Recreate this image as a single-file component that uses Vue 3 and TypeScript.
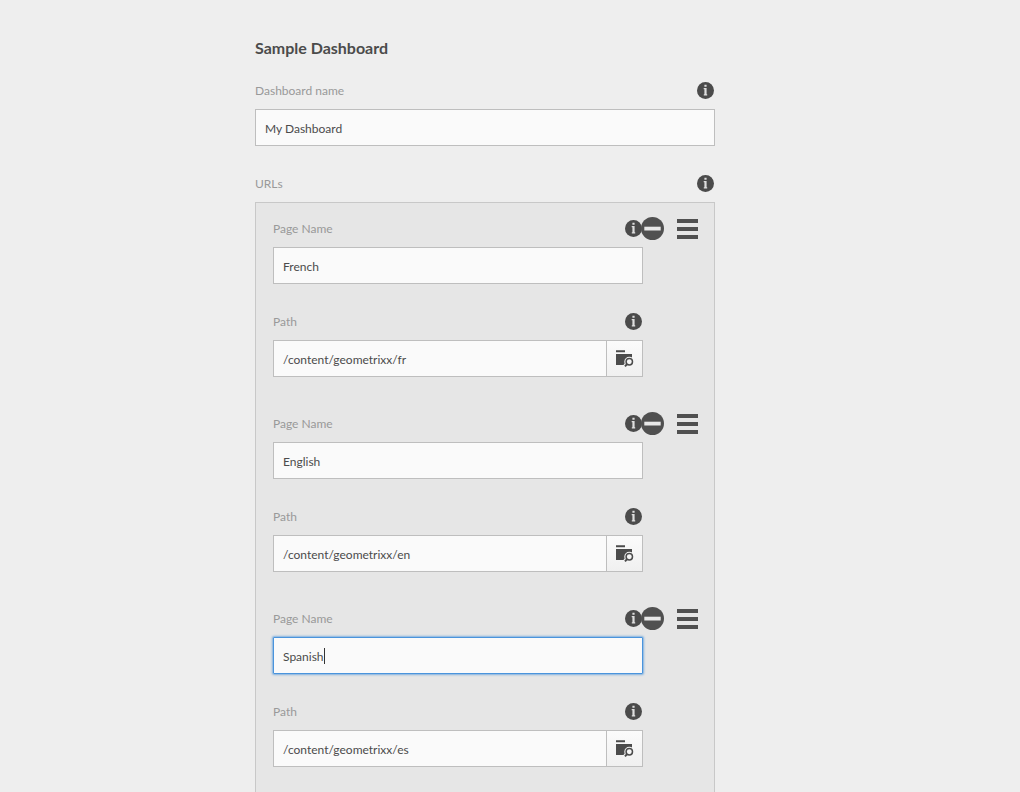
<script setup lang="ts">
import { ref } from 'vue'

interface UrlEntry {
  id: string
  name: string
  path: string
}

const dashboardName = ref('My Dashboard')
const activeId = ref('es')
const entries = ref<UrlEntry[]>([
  { id: 'fr', name: 'French', path: '/content/geometrixx/fr' },
  { id: 'en', name: 'English', path: '/content/geometrixx/en' },
  { id: 'es', name: 'Spanish', path: '/content/geometrixx/es' },
])

function removeEntry(id: string) {
  entries.value = entries.value.filter((entry) => entry.id !== id)
}
</script>

<template>
  <svg class="symbols" aria-hidden="true">
    <symbol id="icon-info" viewBox="0 0 17 17">
      <circle cx="8.5" cy="8.5" r="8.5" fill="#4b4b4b" />
      <path d="M7.4 2.8h2.2v2H7.4zM6.7 6.1h2.9v6.2h.6v1.3H6.8v-1.3h.6V7.3h-.7z" fill="#dedede" />
    </symbol>
    <symbol id="icon-remove" viewBox="0 0 23 23">
      <circle cx="11.5" cy="11.5" r="11.5" fill="#505050" />
      <path d="M3.3 9.7h16.4v3.8H3.3z" fill="#e8e8e8" />
    </symbol>
    <symbol id="icon-move" viewBox="0 0 21 20">
      <path d="M0 0h21v4H0zM0 8h21v4H0zM0 16h21v4H0z" fill="#505050" />
    </symbol>
    <symbol id="icon-browse" viewBox="0 0 18 17">
      <path d="M0 .2h9v2H0zM0 4h16v11H0z" fill="#4b4b4b" />
      <circle cx="13.3" cy="11.7" r="5" fill="#f6f6f6" />
      <path d="M11 14l-2.6 2.8" stroke="#f6f6f6" stroke-width="4" />
      <circle cx="13.3" cy="11.7" r="3.2" fill="none" stroke="#4b4b4b" stroke-width="1.5" />
      <path d="M11.2 13.9l-2.2 2.5" stroke="#4b4b4b" stroke-width="2" />
    </symbol>
  </svg>

  <form class="page" @submit.prevent>
    <h1 class="title">Sample Dashboard</h1>

    <div class="field">
      <div class="label-row">
        <label for="dashboard-name">Dashboard name</label>
        <button type="button" class="icon-button info" aria-label="About dashboard name">
          <svg><use href="#icon-info" /></svg>
        </button>
      </div>
      <input id="dashboard-name" v-model="dashboardName" class="textbox" type="text" />
    </div>

    <div class="label-row">
      <span id="urls-label">URLs</span>
      <button type="button" class="icon-button info" aria-label="About URLs">
        <svg><use href="#icon-info" /></svg>
      </button>
    </div>
    <ol class="url-list" aria-labelledby="urls-label">
      <li v-for="entry in entries" :key="entry.id" class="url-item">
        <div class="url-fields">
          <div class="field">
            <div class="label-row">
              <label :for="`name-${entry.id}`">Page Name</label>
              <button type="button" class="icon-button info" aria-label="About page name">
                <svg><use href="#icon-info" /></svg>
              </button>
            </div>
            <div class="editor">
              <input
                :id="`name-${entry.id}`"
                v-model="entry.name"
                class="textbox"
                :class="{ active: activeId === entry.id }"
                type="text"
                @focus="activeId = entry.id"
              />
              <span v-if="activeId === entry.id" class="caret-layer" aria-hidden="true">
                <span class="caret-offset">{{ entry.name }}</span>
                <span class="caret"></span>
              </span>
            </div>
          </div>
          <div class="label-row">
            <label :for="`path-${entry.id}`">Path</label>
            <button type="button" class="icon-button info" aria-label="About path">
              <svg><use href="#icon-info" /></svg>
            </button>
          </div>
          <div class="path-group">
            <input :id="`path-${entry.id}`" v-model="entry.path" class="textbox" type="text" />
            <button type="button" class="browse" aria-label="Browse">
              <svg><use href="#icon-browse" /></svg>
            </button>
          </div>
        </div>
        <div class="actions">
          <button type="button" class="icon-button remove" aria-label="Remove" @click="removeEntry(entry.id)">
            <svg><use href="#icon-remove" /></svg>
          </button>
          <button type="button" class="icon-button move" aria-label="Reorder">
            <svg><use href="#icon-move" /></svg>
          </button>
        </div>
      </li>
    </ol>
  </form>
</template>

<style>
html {
  scrollbar-width: none;
}

body {
  margin: 0;
  background: #eeeeee;
}
</style>

<style scoped>
.symbols {
  position: absolute;
  width: 0;
  height: 0;
}

.page {
  box-sizing: border-box;
  margin: 0 25%;
  padding: 36px 50px 36px 0;
  color: #4b4b4b;
  font-family: Lato, "Noto Sans", sans-serif;
  font-size: 12px;
}

.title {
  margin: 0 0 12px;
  font-size: 16px;
  font-weight: 700;
  line-height: 24px;
}

.field {
  margin-bottom: 19px;
}

.label-row {
  display: flex;
  align-items: center;
  justify-content: space-between;
  height: 37px;
  color: #999999;
}

.icon-button {
  flex: none;
  padding: 0;
  border: 0;
  background: none;
}

.icon-button svg {
  display: block;
  width: 100%;
  height: 100%;
}

.info {
  width: 17px;
  height: 17px;
  margin-right: 1px;
}

.textbox {
  box-sizing: border-box;
  display: block;
  width: 100%;
  min-width: 0;
  height: 37px;
  padding: 1px 9px 0;
  border: 1px solid #bebebe;
  border-radius: 0;
  outline: none;
  background: #fafafa;
  color: #4b4b4b;
  font: inherit;
}

.textbox.active {
  border-color: #4a94dc;
  border-radius: 1px;
  box-shadow: 0 0 2px 1px rgba(74, 148, 220, 0.65);
  caret-color: transparent;
}

.editor {
  position: relative;
}

.caret-layer {
  position: absolute;
  inset: 0 10px;
  display: flex;
  align-items: center;
  pointer-events: none;
}

.caret-offset {
  visibility: hidden;
}

.caret {
  width: 1px;
  height: 16px;
  background: #333333;
}

.url-list {
  margin: 0;
  padding: 7px 16px 28px 17px;
  border: 1px solid #c8c8c8;
  background: #e6e6e6;
  list-style: none;
}

.url-item {
  display: flex;
}

.url-item + .url-item {
  margin-top: 28px;
}

.url-fields {
  flex: 1;
  min-width: 0;
}

.path-group {
  display: flex;
}

.path-group .textbox {
  flex: 1;
}

.browse {
  display: flex;
  flex: none;
  align-items: center;
  justify-content: center;
  width: 36px;
  height: 37px;
  padding: 0;
  border: 1px solid #bebebe;
  border-left: 0;
  background: linear-gradient(#fbfbfb, #f0f0f0);
}

.browse svg {
  width: 18px;
  height: 17px;
}

.actions {
  display: flex;
  flex: none;
  align-items: center;
  gap: 13px;
  height: 37px;
  margin-left: -2px;
}

.remove {
  width: 23px;
  height: 23px;
}

.move {
  width: 21px;
  height: 20px;
}
</style>
